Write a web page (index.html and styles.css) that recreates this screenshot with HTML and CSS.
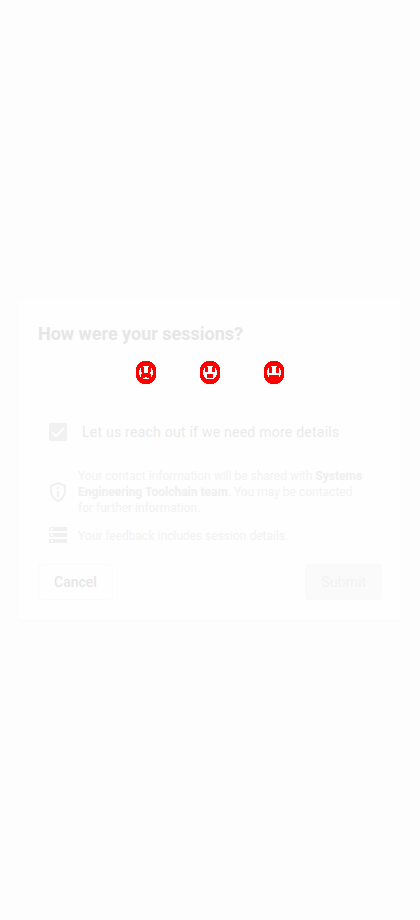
FILE: index.html
```html
<!DOCTYPE html>
<html lang="en">
<head>
<meta charset="utf-8">
<title>Session feedback</title>
<link rel="stylesheet" href="styles.css">
</head>
<body>
<main class="card">
  <h1 class="title">How were your sessions?</h1>
  <div class="faces">
    <svg class="face" viewBox="0 0 20 23"><path class="disc" d="M6 0h8v1h2v1h1v1h1v1h1v2h1v11h-1v2h-1v1h-1v1h-1v1h-2v1H6v-1H4v-1H3v-1H2v-1H1v-2H0V6h1V4h1V3h1V2h1V1h2z"/><path class="cut" d="M7 5h6v1h-1v6H8V6H7zM4 7h1v4h1v2H5v3H4v-2H3V9h1zM15 7h1v2h1v5h-1v2h-1v-3h-1v-2h1zM9 16h2v1h2v1H7v-1h2z"/></svg>
    <svg class="face" viewBox="0 0 20 23"><path class="disc" d="M6 0h8v1h2v1h1v1h1v1h1v2h1v11h-1v2h-1v1h-1v1h-1v1h-2v1H6v-1H4v-1H3v-1H2v-1H1v-2H0V6h1V4h1V3h1V2h1V1h2z"/><path class="cut" d="M8 5h4v6h3V7h1v2h1v5h-1v2h-1v1h-1v1H6v-1H5v-1H4v-2H3V9h1V7h1v4h3zM7 5h6v1H7z"/><path class="disc" d="M7 13h6v4H7z"/></svg>
    <svg class="face" viewBox="0 0 20 23"><path class="disc" d="M6 0h8v1h2v1h1v1h1v1h1v2h1v11h-1v2h-1v1h-1v1h-1v1h-2v1H6v-1H4v-1H3v-1H2v-1H1v-2H0V6h1V4h1V3h1V2h1V1h2z"/><path class="cut" d="M8 5h4v7h3V7h1v2h1v5h-1v2h-1v-2H5v2H4v-2H3V9h1V7h1v5h3zM7 5h6v1H7z"/></svg>
  </div>
  <div class="consent">
    <svg class="check" viewBox="0 0 18 18"><rect width="18" height="18" rx="1.5"/><path d="M3 9.2l4.1 4.1 8-8.3"/></svg>
    <span>Let us reach out if we need more details</span>
  </div>
  <div class="note contact">
    <svg class="icon" viewBox="0 0 24 24"><path d="M12 2 4 5v6.09c0 5.05 3.41 9.76 8 10.91 4.59-1.15 8-5.86 8-10.91V5l-8-3zm6 9.09c0 4-2.55 7.7-6 8.83-3.45-1.13-6-4.82-6-8.83v-4.7l6-2.25 6 2.25v4.7zM11 11h2v6h-2zM11 7h2v2h-2z"/></svg>
    <p>Your contact information will be shared with <b>Systems Engineering Toolchain team</b>. You may be contacted for further information.</p>
  </div>
  <div class="note session">
    <svg class="icon" viewBox="0 0 24 24"><path d="M3 20h18v-4H3v4zm2-3h2v2H5v-2zM3 4v4h18V4H3zm4 3H5V5h2v2zm-4 7h18v-4H3v4zm2-3h2v2H5v-2z"/></svg>
    <p>Your feedback includes session details.</p>
  </div>
  <div class="actions">
    <button class="button cancel">Cancel</button>
    <button class="button submit" disabled>Submit</button>
  </div>
</main>
</body>
</html>
```
FILE: styles.css
```css
* { box-sizing: border-box; }
body {
  margin: 0;
  min-height: 920px;
  display: flex;
  align-items: center;
  justify-content: center;
  background: #fdfdfd;
  font-family: Roboto, sans-serif;
}
.card {
  width: 384px;
  height: 320px;
  padding: 20px;
  border-radius: 4px;
  background: #fefefe;
  box-shadow: 0 1px 3px #fafafa;
}
.title {
  margin: 0;
  font-size: 18px;
  line-height: 28px;
  font-weight: 700;
  color: #e6e6e6;
}
.faces {
  display: flex;
  justify-content: center;
  gap: 44px;
  margin-top: 13px;
}
.face { width: 20px; height: 23px; shape-rendering: crispEdges; }
.disc { fill: #f00; }
.cut { fill: #fff; }
.consent {
  display: flex;
  align-items: center;
  gap: 15px;
  height: 24px;
  margin: 36px 0 0 11px;
  font-size: 14px;
  letter-spacing: 0.24px;
  white-space: nowrap;
  color: #eaeaea;
}
.check { width: 18px; height: 18px; fill: #f1f1f1; }
.check path { fill: none; stroke: #fefefe; stroke-width: 2; }
.note {
  display: flex;
  align-items: center;
  gap: 8px;
  padding-left: 8px;
  font-size: 12px;
  line-height: 16px;
  color: #f2f2f2;
}
.note p { margin: 0; width: 292px; }
.note b { font-weight: 700; color: #efefef; }
.icon { flex: none; width: 24px; height: 24px; fill: #f0f0f0; }
.contact { margin-top: 24px; }
.session { margin-top: 7px; }
.session p { padding-top: 2px; }
.actions { display: flex; justify-content: space-between; margin-top: 17px; }
.button {
  height: 36px;
  padding: 0;
  border: 1px solid #fbfbfb;
  border-radius: 4px;
  background: #fefefe;
  font: 500 14px/20px Roboto, sans-serif;
  color: #e7e7e7;
}
.cancel { width: 75px; }
.submit {
  width: 77px;
  border-color: #fafafa;
  background: #fafafa;
  font-weight: 400;
  letter-spacing: 0.1px;
  text-indent: 1px;
  color: #f3f3f3;
}
```
